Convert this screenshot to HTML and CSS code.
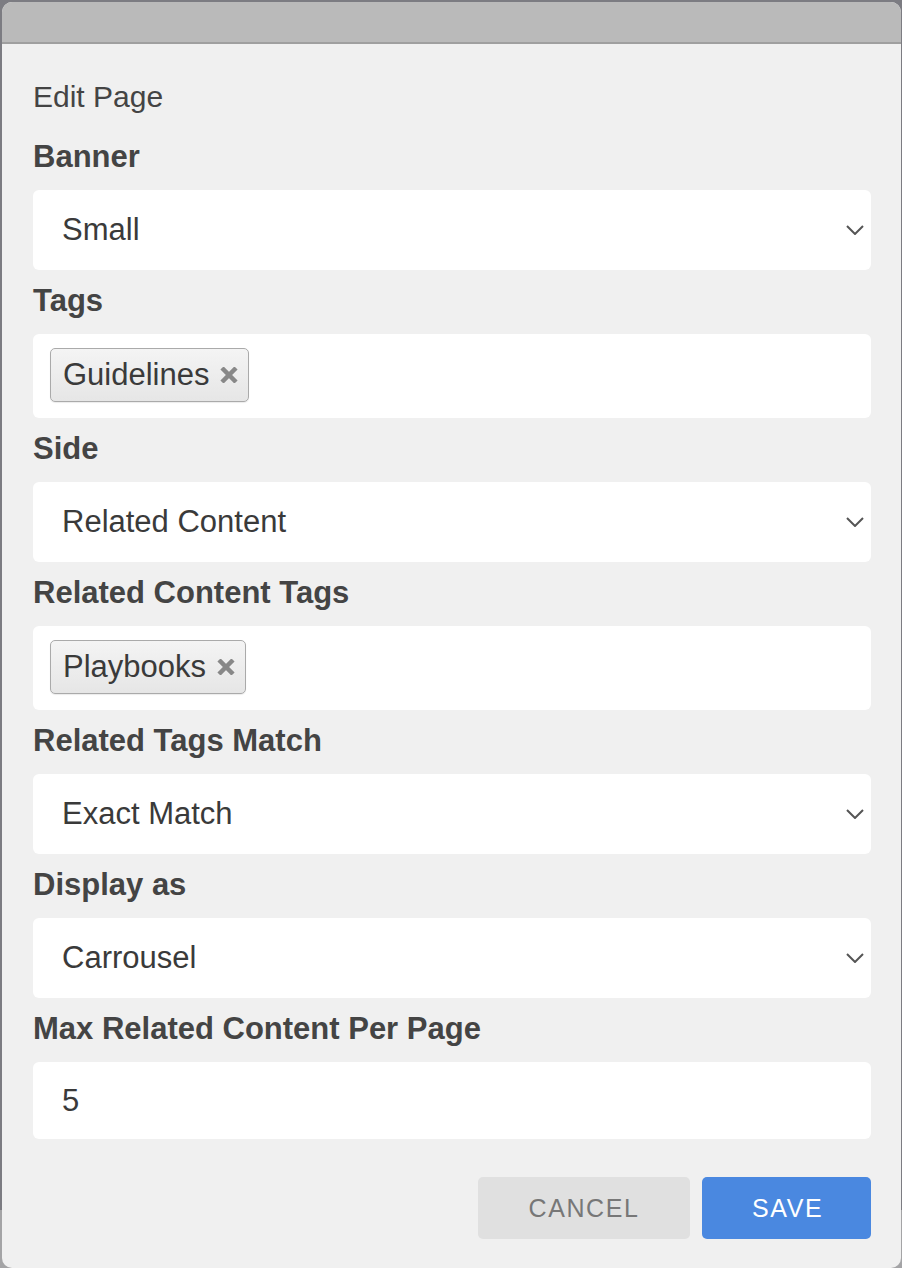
FILE: index.html
```html
<!DOCTYPE html>
<html lang="en">
<head>
<meta charset="UTF-8" />
<meta name="viewport" content="width=device-width, initial-scale=1" />
<title>Edit Page</title>
<link rel="stylesheet" href="styles.css">
</head>
<body>

<div class="modal">
  <div class="modal-header"></div>

  <div class="modal-body">
    <h2 class="title">Edit Page</h2>

    <div class="field-label">Banner</div>
    <div class="select-box">
      <span>Small</span>
      <svg class="chevron" width="18" height="10" viewBox="0 0 18 10"><path d="M1 1 L9 9 L17 1" /></svg>
    </div>

    <div class="field-label">Tags</div>
    <div class="tag-box">
      <span class="chip">Guidelines
        <svg class="chip-x" width="18" height="16" viewBox="0 0 18 16"><path d="M2 1 L16 15 M16 1 L2 15" /></svg>
      </span>
    </div>

    <div class="field-label">Side</div>
    <div class="select-box">
      <span>Related Content</span>
      <svg class="chevron" width="18" height="10" viewBox="0 0 18 10"><path d="M1 1 L9 9 L17 1" /></svg>
    </div>

    <div class="field-label">Related Content Tags</div>
    <div class="tag-box">
      <span class="chip">Playbooks
        <svg class="chip-x" width="18" height="16" viewBox="0 0 18 16"><path d="M2 1 L16 15 M16 1 L2 15" /></svg>
      </span>
    </div>

    <div class="field-label">Related Tags Match</div>
    <div class="select-box">
      <span>Exact Match</span>
      <svg class="chevron" width="18" height="10" viewBox="0 0 18 10"><path d="M1 1 L9 9 L17 1" /></svg>
    </div>

    <div class="field-label">Display as</div>
    <div class="select-box">
      <span>Carrousel</span>
      <svg class="chevron" width="18" height="10" viewBox="0 0 18 10"><path d="M1 1 L9 9 L17 1" /></svg>
    </div>

    <div class="field-label">Max Related Content Per Page</div>
    <input class="text-input" type="text" value="5" />

    <div class="actions">
      <button class="btn btn-cancel">Cancel</button>
      <button class="btn btn-save">Save</button>
    </div>
  </div>
</div>

</body>
</html>
```

FILE: styles.css
```css
* {
  box-sizing: border-box;
}

html, body {
  height: 100%;
}

body {
  margin: 0;
  padding: 2px 1px 0 2px;
  font-family: 'Liberation Sans', Arial, Helvetica, sans-serif;
  background: linear-gradient(to bottom, #7c7c82 0, #7c7c82 1210px, #a4a4a6 1210px);
  color: #444;
  overflow: hidden;
}

.modal {
  height: 1266px;
  background: #f0f0f0;
  border-radius: 10px;
  overflow: hidden;
}

.modal-header {
  height: 42px;
  background: #bababa;
  border-bottom: 2px solid #9f9f9f;
}

.modal-body {
  padding: 36px 30px 0 31px;
}

.title {
  margin: 0;
  padding-bottom: 12px;
  font-size: 30px;
  font-weight: 400;
  line-height: 34px;
  color: #444;
}

.field-label {
  margin: 14px 0 16px;
  font-size: 31px;
  font-weight: 700;
  line-height: 34px;
  color: #444;
}

.select-box {
  display: flex;
  align-items: center;
  justify-content: space-between;
  height: 80px;
  padding: 0 7px 0 29px;
  background: #fff;
  border-radius: 6px;
  font-size: 31px;
  color: #3a3a3a;
}

.chevron {
  fill: none;
  stroke: #555;
  stroke-width: 2;
}

.tag-box {
  display: flex;
  align-items: flex-start;
  height: 84px;
  padding: 14px 17px;
  background: #fff;
  border-radius: 6px;
}

.chip {
  display: inline-flex;
  align-items: center;
  gap: 11px;
  height: 54px;
  padding: 0 10px 0 12px;
  font-size: 31px;
  color: #3a3a3a;
  background: linear-gradient(to bottom, #f4f4f4, #e6e6e6);
  border: 1px solid #aaa;
  border-radius: 5px;
  box-shadow: 0 1px 1px rgba(0, 0, 0, 0.08);
}

.chip-x {
  fill: none;
  stroke: #888;
  stroke-width: 4.5;
}

.text-input {
  display: block;
  width: 100%;
  height: 77px;
  padding: 0 29px;
  font-family: inherit;
  font-size: 31px;
  color: #3a3a3a;
  background: #fff;
  border: none;
  border-radius: 6px;
  outline: none;
}

.actions {
  display: flex;
  justify-content: flex-end;
  gap: 12px;
  margin-top: 38px;
}

.btn {
  height: 62px;
  padding: 0 50px;
  border: none;
  border-radius: 5px;
  font-family: inherit;
  font-size: 25px;
  letter-spacing: 1.6px;
  text-transform: uppercase;
}

.btn-cancel {
  width: 212px;
  background: #e0e0e0;
  color: #777;
}

.btn-save {
  width: 169px;
  background: #4a88e0;
  color: #fff;
}
```
